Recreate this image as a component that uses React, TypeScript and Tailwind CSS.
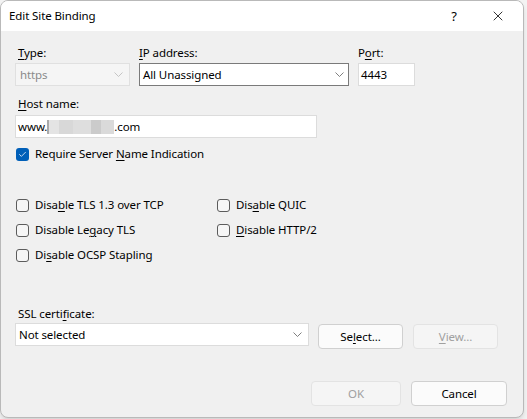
import { Check, X } from "lucide-react";

const font = { fontFamily: '"Noto Sans", "Liberation Sans", sans-serif' };

function U({ children }: { children: string }) {
  return <span className="underline underline-offset-[2px]">{children}</span>;
}

function Chevron({ className = "" }: { className?: string }) {
  return (
    <svg width="9" height="5" viewBox="0 0 9 5" className={className}>
      <path d="M0.5 0.5 L4.5 4.5 L8.5 0.5" fill="none" stroke="#707070" strokeWidth="0.9" />
    </svg>
  );
}

function Box({ checked = false }: { checked?: boolean }) {
  if (checked) {
    return (
      <span className="w-[13px] h-[13px] rounded-[3px] bg-[#005fb8] flex items-center justify-center shrink-0">
        <Check size={9} strokeWidth={2} color="white" />
      </span>
    );
  }
  return <span className="w-[13px] h-[13px] rounded-[3px] border border-[#5c5c5c] bg-[#f6f6f6] shrink-0" />;
}

function CheckRow({ children, checked = false, width }: { children: React.ReactNode; checked?: boolean; width?: string }) {
  return (
    <div className={`flex items-center gap-[6px] h-[16px] ${width ?? ""}`}>
      <Box checked={checked} />
      <span>{children}</span>
    </div>
  );
}

export default function App() {
  return (
    <div className="w-[527px] h-[419px] bg-[#f3f3f3] overflow-hidden text-[11.5px] tracking-[-0.1px] leading-[16px] text-black" style={font}>
      <div className="w-[524px] h-[418px] flex flex-col rounded-lg border border-[#b9b9b9] overflow-hidden bg-[#f0f0f0] shadow-md">
        <div className="h-[30px] bg-white flex items-center pl-[8px] shrink-0">
          <span className="flex-1">Edit Site Binding</span>
          <span className="w-[20px] text-center mr-[26px] text-[13px]">?</span>
          <X size={16} strokeWidth={1.2} className="mr-[17px]" />
        </div>
        <div className="flex-1 pl-[14px] pt-[14px]">
          <div className="flex">
            <div className="w-[124px] pl-[3px]">
              <U>T</U>ype:
            </div>
            <div className="w-[219px] pl-[0px]">
              <U>I</U>P address:
            </div>
            <div className="pl-[0px]">
              P<U>o</U>rt:
            </div>
          </div>
          <div className="flex mt-[2px] h-[23px]">
            <div className="w-[115px] h-[23px] border border-[#e0e0e0] bg-[#f5f5f5] flex items-center pl-[4px] pr-[6px] text-[#8a8a8a]">
              <span className="flex-1">https</span>
              <Chevron className="opacity-40" />
            </div>
            <div className="ml-[9px] w-[210px] h-[23px] border border-[#7a7a7a] bg-white flex items-center pl-[3px] pr-[4px]">
              <span className="flex-1">All Unassigned</span>
              <Chevron />
            </div>
            <div className="ml-[9px] w-[57px] h-[23px] border border-[#dcdcdc] bg-white flex items-center pl-[2px]">
              4443
            </div>
          </div>
          <div className="mt-[10px] pl-[3px]">
            <U>H</U>ost name:
          </div>
          <div className="mt-[3px] w-[302px] h-[23px] border border-[#dcdcdc] bg-white flex items-center pl-[2px]">
            <span>www.</span>
            <span className="flex h-[14px]">
              <span className="w-[2px] bg-[#aaaaaa]" />
              <span className="w-[10px] bg-[#e4e4e4]" />
              <span className="w-[14px] bg-[#d8d8d8]" />
              <span className="w-[18px] bg-[#dedede]" />
              <span className="w-[10px] bg-[#cbcbcb]" />
              <span className="w-[13px] bg-[#dadada]" />
            </span>
            <span>.com</span>
          </div>
          <div className="mt-[8px] pl-[1px]">
            <CheckRow checked>
              Require Server <U>N</U>ame Indication
            </CheckRow>
          </div>
          <div className="mt-[35px] pl-[1px] flex flex-col gap-[9px]">
            <div className="flex">
              <CheckRow width="w-[201px]">
                Disa<U>b</U>le TLS 1.3 over TCP
              </CheckRow>
              <CheckRow>
                Dis<U>a</U>ble QUIC
              </CheckRow>
            </div>
            <div className="flex">
              <CheckRow width="w-[201px]">
                Disable Le<U>g</U>acy TLS
              </CheckRow>
              <CheckRow>
                <U>D</U>isable HTTP/2
              </CheckRow>
            </div>
            <CheckRow>
              Di<U>s</U>able OCSP Stapling
            </CheckRow>
          </div>
          <div className="mt-[43px] pl-[3px]">
            SSL certi<U>f</U>icate:
          </div>
          <div className="flex mt-[1px]">
            <div className="w-[294px] h-[23px] border border-[#dcdcdc] bg-white flex items-center pl-[3px] pr-[6px]">
              <span className="flex-1">Not selected</span>
              <Chevron />
            </div>
            <button className="ml-[9px] mt-[1px] w-[85px] h-[25px] rounded-[4px] border border-[#d0d0d0] bg-[#fbfbfb] flex items-center justify-center">
              <span>
                Se<U>l</U>ect...
              </span>
            </button>
            <button className="ml-[10px] mt-[1px] w-[85px] h-[25px] rounded-[4px] border border-[#e3e3e3] bg-[#f5f5f5] flex items-center justify-center text-[#a0a0a0]">
              <span>
                <U>V</U>iew...
              </span>
            </button>
          </div>
          <div className="flex justify-end mt-[32px] pr-[16px] gap-[10px]">
            <button className="w-[90px] h-[25px] rounded-[4px] border border-[#e3e3e3] bg-[#f5f5f5] text-[#a0a0a0]">OK</button>
            <button className="w-[96px] h-[25px] rounded-[4px] border border-[#d0d0d0] bg-[#fbfbfb]">Cancel</button>
          </div>
        </div>
      </div>
    </div>
  );
}
